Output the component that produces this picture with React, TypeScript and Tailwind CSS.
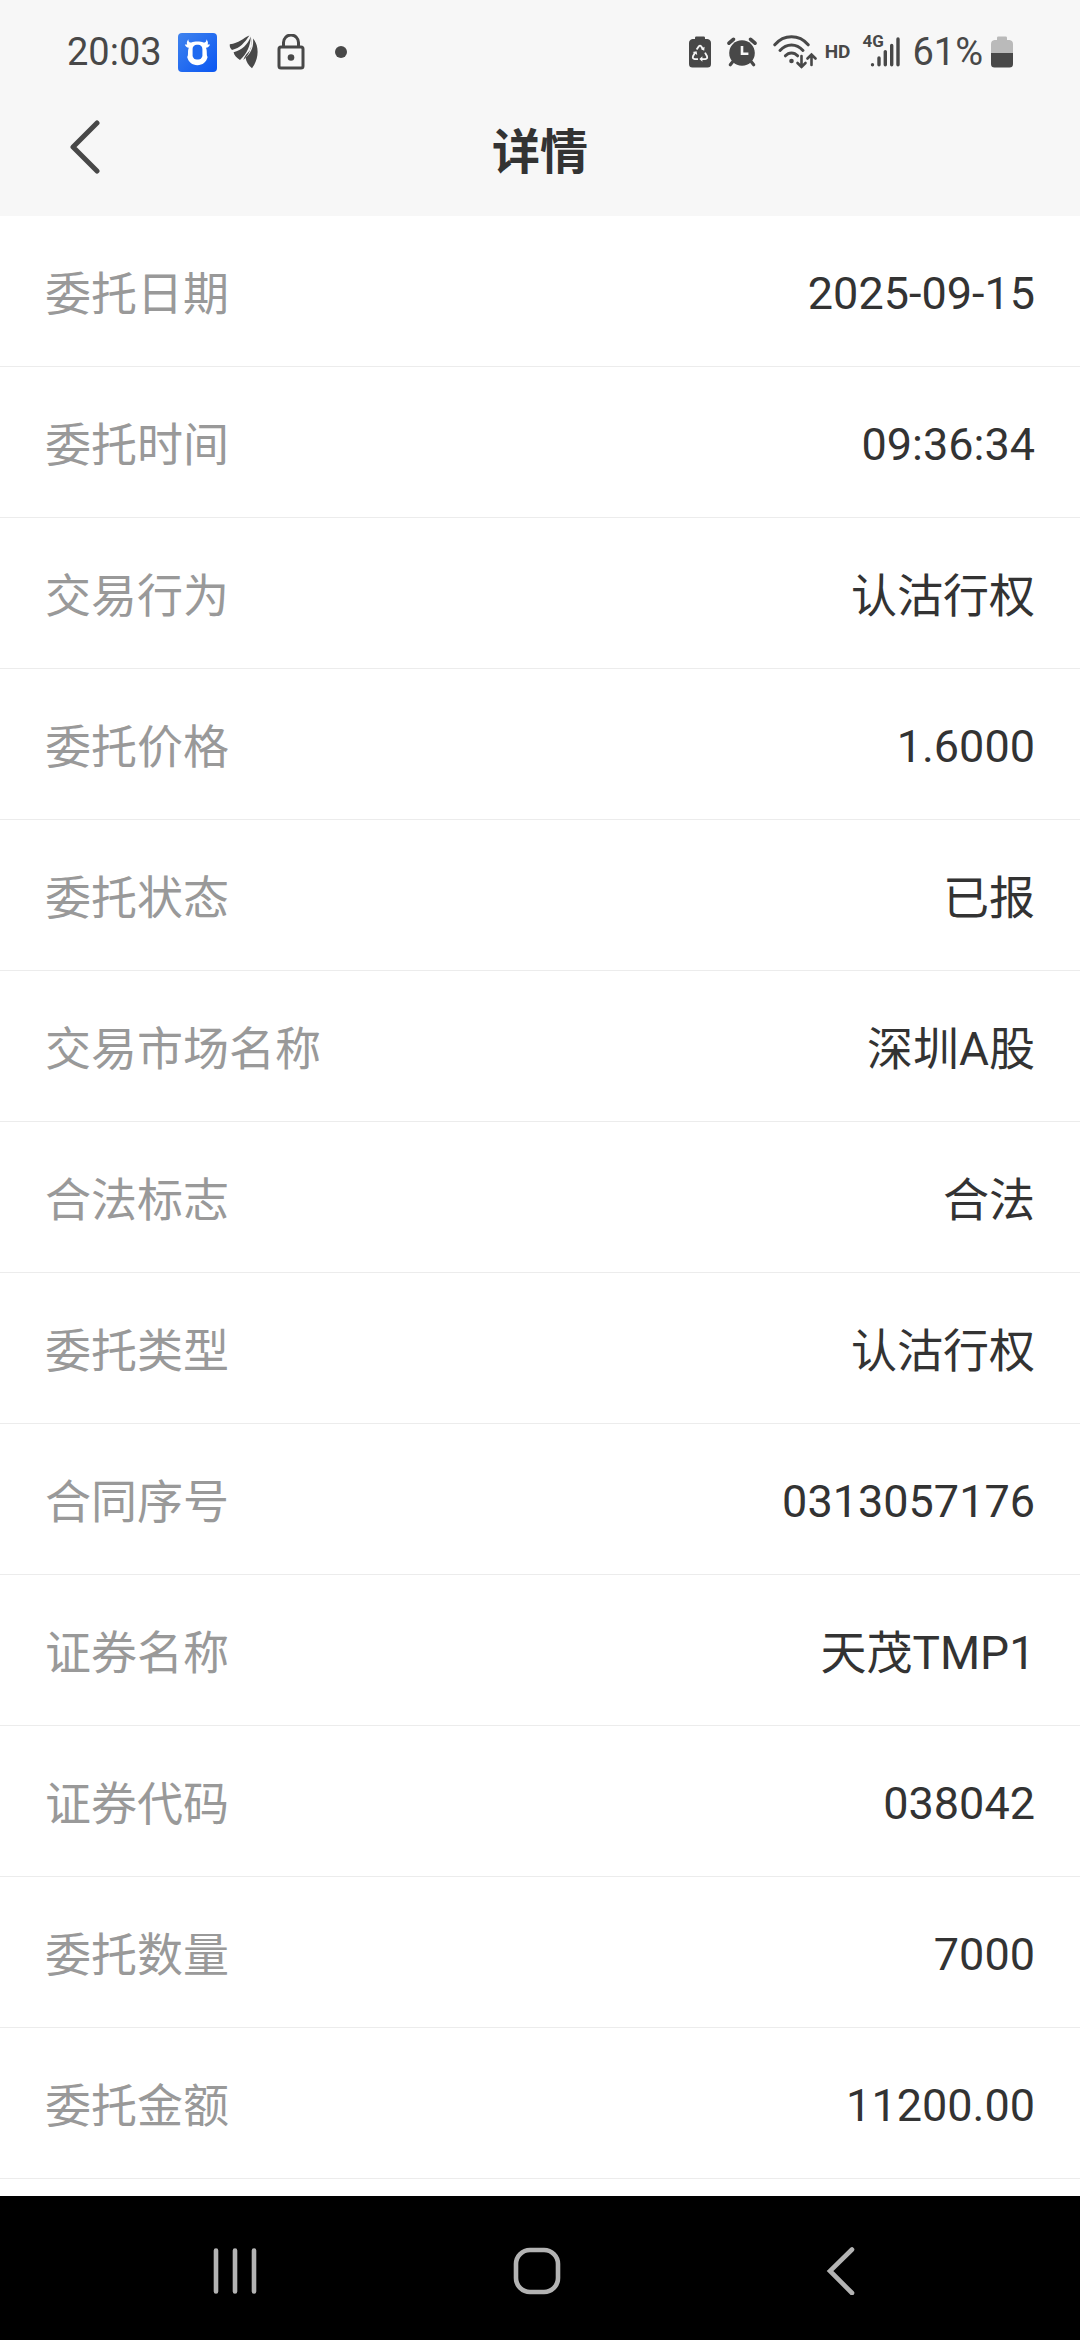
import clsx from "clsx"

const rows = [
  { label: "委托日期", value: "2025-09-15", numeric: true },
  { label: "委托时间", value: "09:36:34", numeric: true },
  { label: "交易行为", value: "认沽行权" },
  { label: "委托价格", value: "1.6000", numeric: true },
  { label: "委托状态", value: "已报" },
  { label: "交易市场名称", value: "深圳A股" },
  { label: "合法标志", value: "合法" },
  { label: "委托类型", value: "认沽行权" },
  { label: "合同序号", value: "0313057176", numeric: true },
  { label: "证券名称", value: "天茂TMP1" },
  { label: "证券代码", value: "038042", numeric: true },
  { label: "委托数量", value: "7000", numeric: true },
  { label: "委托金额", value: "11200.00", numeric: true },
]

const BullAppIcon = () => (
  <svg className="h-[39px] w-[39px]" viewBox="0 0 39 39" fill="none">
    <defs>
      <linearGradient id="bull" x1="0" y1="0" x2="1" y2="1">
        <stop offset="0" stopColor="#3f83ee" />
        <stop offset="1" stopColor="#0a56f2" />
      </linearGradient>
    </defs>
    <rect width="39" height="39" rx="4" fill="url(#bull)" />
    <path
      d="M10.400 6.200c-.2 2.400.8 3.400 3 3.400 1.600-.6 3.600-1 6-1s4.400.4 6 1c2.200 0 3.200-1 3-3.400 1.600 1.900 1.900 3.900 1.200 5.200l2.400.2c-.6 2-2 3-4 3.200.6 1.500.8 3 .8 5.200 0 2 .2 3 .8 4-1.200 5-5 8.200-10.200 8.200s-9-3.200-10.200-8.200c.6-1 .8-2 .8-4 0-2.200.2-3.700.8-5.200-2-.2-3.400-1.200-4-3.200l2.400-.2c-.7-1.300-.4-3.300 1.200-5.200Z"
      fill="#fff"
    />
    <rect x="14.600" y="11.800" width="9.800" height="14.800" rx="4.200" fill="#1f6af0" />
  </svg>
)

const WingIcon = () => (
  <svg className="h-[34px] w-[30px]" viewBox="0 0 30 34" fill="#484848">
    <path d="M20.400.6C14 3.200 10 8.500.8 9.200c-.4 2.200.6 4.400 2.200 5.800C11 13.400 15.800 7.400 20.400.6Z" />
    <path d="M21.800 1.600C18.500 10 13 15.200 4.600 17.200c.6 3 3 5.600 6.400 7.800C18 19 21.500 10.500 21.800 1.600Z" />
    <path d="M23 2.800C23.200 12 20.500 19.500 14.400 25c1.500-5.500 6-8 7.600-11.500Z" />
    <path d="M24 3.500c.8 8-1.500 14-7.400 19.200.6 4 2.900 7.500 6.400 10.500C29.500 24.500 31 11.500 24 3.500Z" />
  </svg>
)

const LockIcon = () => (
  <svg className="h-[36px] w-[28px]" viewBox="0 0 28 36" fill="none" stroke="#484848" strokeWidth="3">
    <rect x="2" y="13" width="24" height="21" rx="2" />
    <path d="M6.500 13V8.500a7.500 7.500 0 0 1 15 0V13" />
    <circle cx="14" cy="23.500" r="3.300" fill="#484848" stroke="none" />
  </svg>
)

const BatterySaverIcon = () => (
  <svg className="h-[32px] w-[22px]" viewBox="0 0 22 32" fill="none">
    <path d="M6 3V1.800Q6 .5 7.300.5h7.400Q16 .5 16 1.800V3h2.500Q22 3.800 22 7v21q0 3.500-3.500 3.500h-15Q0 31.500 0 28V7q0-3.200 3.500-4Z" fill="#484848" />
    <path
      d="M7.600 13.600 9.800 10.400q1.200-1.400 2.400 0l2 3M16 16.600l2 3.600q.8 2.600-1.800 2.900h-3.600M9 23.100H5.800q-2.600-.3-1.800-2.900l1.800-3.200"
      stroke="#f7f7f7"
      strokeWidth="1.800"
    />
    <path d="m15.600 10.800-.4 4-3.400-1.800ZM13.400 20.300v5.400l-3-2.700ZM3.600 16l4-.8.600 3.800Z" fill="#f7f7f7" />
  </svg>
)

const AlarmIcon = () => (
  <svg className="h-[30px] w-[30px]" viewBox="0 0 30 30" fill="none">
    <circle cx="15" cy="16" r="12.800" fill="#484848" />
    <path d="m2 6.200 4.400-3.900M28 6.200l-4.400-3.900" stroke="#484848" strokeWidth="3.600" strokeLinecap="round" />
    <path d="m5.500 25-2.200 2.700M24.500 25l2.200 2.700" stroke="#484848" strokeWidth="3.200" strokeLinecap="round" />
    <path d="M15 9v7.800h6.400" stroke="#f7f7f7" strokeWidth="2.600" />
  </svg>
)

const WifiIcon = () => (
  <svg className="h-[34px] w-[44px]" viewBox="0 0 44 34" fill="none" stroke="#484848" strokeWidth="3" strokeLinecap="round">
    <path d="M1.800 9.800C11-.8 26-.8 35.200 9.800" />
    <path d="M7 15.500c6.600-7.400 16.400-7.400 23 0" />
    <path d="M12.400 20.800c3.600-3.900 8.600-3.900 12.200 0" />
    <circle cx="18.500" cy="26" r="2.300" fill="#484848" stroke="none" />
    <path d="M28.500 21v11M24.500 28l4 4 4-4" strokeWidth="2.600" />
    <path d="M38.500 30V19.500M34.500 23.500l4-4 4 4" strokeWidth="2.600" />
  </svg>
)

const SignalIcon = () => (
  <svg className="h-[30px] w-[30px]" viewBox="0 0 30 30" fill="none" stroke="#484848" strokeWidth="3.400" strokeLinecap="round">
    <path d="M2.500 27.700v0M9 21v6.700M15.300 14.600v13.100M21.700 8.400v19.300M28 2v25.700" />
  </svg>
)

const BatteryIcon = () => (
  <svg className="h-[32px] w-[22px]" viewBox="0 0 22 32">
    <path d="M6 4V1.800Q6 .5 7.300.5h7.400Q16 .5 16 1.800V4h2.500Q22 4.500 22 8v9H0V8q0-3.500 3.500-4Z" fill="#bababa" />
    <path d="M0 17h22v11q0 3.500-3.500 3.500h-15Q0 31.500 0 28Z" fill="#484848" />
  </svg>
)

const StatusBar = () => (
  <div className="flex h-[104px] items-center justify-between px-[67px] font-['Roboto',sans-serif] text-[#484848]">
    <div className="flex items-center">
      <span className="text-[38px] leading-[44px]">20:03</span>
      <div className="ml-4 flex items-center">
        <BullAppIcon />
        <div className="ml-3 flex items-center gap-[18px]">
          <WingIcon />
          <LockIcon />
        </div>
        <span className="ml-[30px] h-3 w-3 rounded-full bg-[#484848]" />
      </div>
    </div>
    <div className="flex items-center">
      <BatterySaverIcon />
      <div className="ml-4 flex items-center gap-4">
        <AlarmIcon />
        <WifiIcon />
      </div>
      <span className="ml-2 text-[19px] leading-6 font-bold">HD</span>
      <div className="relative ml-3 pl-2">
        <SignalIcon />
        <span className="absolute -top-1 left-0 text-[17px] leading-4 font-bold">4G</span>
      </div>
      <span className="ml-3 text-[38px] leading-[44px]">61%</span>
      <div className="ml-2">
        <BatteryIcon />
      </div>
    </div>
  </div>
)

const TitleBar = () => (
  <div className="grid h-[112px] grid-cols-[1fr_auto_1fr] items-center px-[68px] pb-[14px]">
    <button type="button" aria-label="返回" className="mb-3 w-[34px] cursor-pointer">
      <svg className="h-[54px] w-[34px]" viewBox="0 0 34 54" fill="none">
        <path d="M29 3 5 27l24 24" stroke="#484848" strokeWidth="5" strokeLinecap="round" strokeLinejoin="round" />
      </svg>
    </button>
    <h1 className="text-[48px] leading-[64px] font-bold text-[#333333]">详情</h1>
  </div>
)

const NavBar = () => (
  <nav className="grid h-[144px] grid-cols-3 items-center justify-items-center bg-black pt-[6px] pr-[89px] pl-[84px]">
    <button type="button" aria-label="最近任务" className="cursor-pointer">
      <svg className="h-[48px] w-[48px]" viewBox="0 0 48 48" stroke="#b3b3b3" strokeWidth="4.600" strokeLinecap="round">
        <path d="M5 3.500v41M24 3.500v41M43 3.500v41" />
      </svg>
    </button>
    <button type="button" aria-label="主屏幕" className="cursor-pointer">
      <svg className="h-[48px] w-[48px]" viewBox="0 0 48 48" fill="none" stroke="#b3b3b3" strokeWidth="4.600">
        <rect x="3" y="3" width="42" height="42" rx="14" />
      </svg>
    </button>
    <button type="button" aria-label="返回上一页" className="cursor-pointer">
      <svg className="h-[48px] w-[30px]" viewBox="0 0 30 48" fill="none" stroke="#b3b3b3" strokeWidth="4.600" strokeLinecap="round">
        <path d="M27 2.500 5 24l22 22" />
      </svg>
    </button>
  </nav>
)

export default function App() {
  return (
    <div className="flex min-h-screen flex-col bg-white font-['Roboto','Noto_Sans_CJK_SC',sans-serif]">
      <header className="bg-[#f7f7f7]">
        <StatusBar />
        <TitleBar />
      </header>
      <main className="flex-1">
        <dl>
          {rows.map((row) => (
            <div
              key={row.label}
              className="flex h-[151px] items-center justify-between border-b border-[#ececec] px-[45px] pt-[6px] text-[46px] leading-[64px]"
            >
              <dt className="text-[#999999]">{row.label}</dt>
              <dd className={clsx("text-[#333333]", row.numeric && "text-[45px]")}>{row.value}</dd>
            </div>
          ))}
        </dl>
      </main>
      <NavBar />
    </div>
  )
}
